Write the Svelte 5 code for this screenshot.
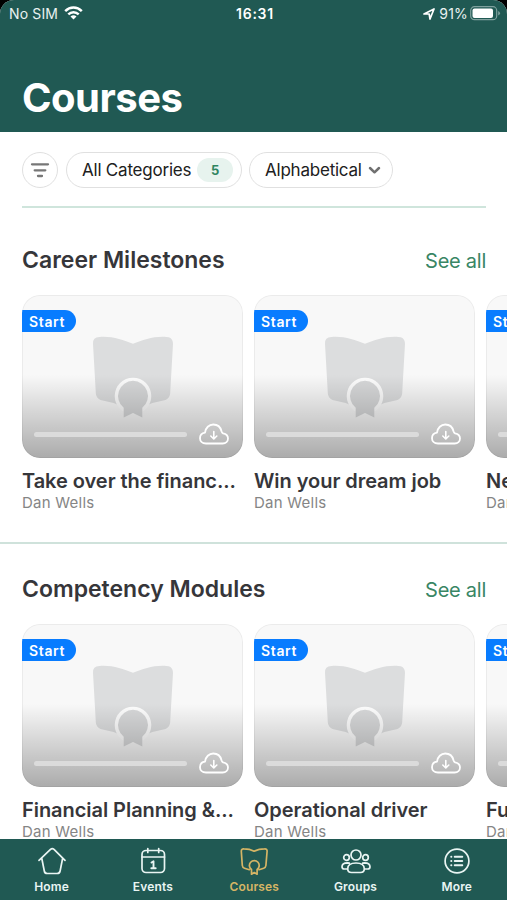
<script>
  const sections = [
    {
      title: "Career Milestones",
      courses: ["Take over the financ...", "Win your dream job", "Negotiation"],
    },
    {
      title: "Competency Modules",
      courses: ["Financial Planning &...", "Operational driver", "Fundamentals"],
    },
  ];
  const tabs = ["Home", "Events", "Courses", "Groups", "More"];
  let active = $state("Courses");
</script>

<div class="screen">
  <header>
    <div class="status">
      <div class="network">
        <span class="carrier">No SIM</span>
        <svg class="wifi" width="19" height="14" viewBox="0 0 19 14">
          <g fill="none" stroke="#fff" stroke-width="2.5">
            <path d="M1.2 5.2C6 .4 13 .4 17.8 5.2" />
            <path d="M4.3 8.4c3-2.9 7.400-2.900 10.400 0" />
          </g>
          <path d="M6.500 10.500q3-2.500 6 0l-3 3z" fill="#fff" />
        </svg>
      </div>
      <span class="time">16:31</span>
      <div class="power">
        <svg width="12" height="12" viewBox="0 0 12 12">
          <path
            d="M1 6 11 1 7 11 6.200 6z"
            fill="none"
            stroke="#fff"
            stroke-width="1.700"
            stroke-linejoin="round"
          />
        </svg>
        <span class="percent">91%</span>
        <svg class="battery" width="31" height="15" viewBox="0 0 31 15">
          <rect x=".7" y=".7" width="26" height="13" rx="3.800" fill="none" stroke="#7fa19e" stroke-width="1.200" />
          <rect x="2.500" y="2.500" width="20.500" height="9.500" rx="2" fill="#fff" />
          <path d="M28.200 5v4.500q1.800-.6 1.800-2.200T28.200 5z" fill="#7fa19e" />
        </svg>
      </div>
    </div>
    <h1>Courses</h1>
  </header>

  <main>
    <div class="filters">
      <button class="round" aria-label="Filter">
        <svg width="20" height="16" viewBox="0 0 20 16">
          <path
            d="M2 2.300h16M4.700 8.300h10.600M8 14h4"
            fill="none"
            stroke="#777"
            stroke-width="2.300"
            stroke-linecap="round"
          />
        </svg>
      </button>
      <button class="pill categories"><span>All Categories</span><b>5</b></button>
      <button class="pill sort">
        <span>Alphabetical</span>
        <svg width="13" height="9" viewBox="0 0 13 9">
          <path
            d="m2 2 4.500 4.300L11 2"
            fill="none"
            stroke="#707070"
            stroke-width="2.500"
            stroke-linecap="round"
            stroke-linejoin="round"
          />
        </svg>
      </button>
    </div>

    {#each sections as section}
      <section>
        <div class="heading">
          <h2>{section.title}</h2>
          <a href="#all">See all</a>
        </div>
        <div class="row">
          {#each section.courses as course}
            <article>
              <div class="cover">
                <svg class="book" width="82" height="83" viewBox="0 0 82 83">
                  <path
                    d="M1 8Q.5 1 7.500 1C20 0 31 4 41 7.800 51 4 62 0 74.500 1 81.500 1 81 8 81 8L78.200 57Q78 62 73.500 64 62 66 53 70H29Q20 66 8.500 64 4 62 3.800 57z"
                    fill="#dcddde"
                  />
                  <circle cx="41" cy="60" r="18.300" fill="#fcfcfc" />
                  <path d="M41 44.800a15.200 15.200 0 0 1 9.300 27V81.500L41 77l-9.300 4.500V71.800a15.200 15.200 0 0 1 9.300-27z" fill="#d6d7d8" />
                </svg>
                <div class="shade"></div>
                <span class="badge">Start</span>
                <div class="tools">
                  <div class="track"></div>
                  <svg width="30" height="22" viewBox="0 0 30 22">
                    <g fill="none" stroke="#fff" stroke-width="1.800" stroke-linecap="round" stroke-linejoin="round">
                      <path d="M7 20.500C3 20.500 1 18 1 15.200 1 12 3.200 9.900 6 9.600 6.600 4.800 10 1.500 14.300 1.500c4.200 0 7.200 2.600 8.200 6.700.3 1 .6 1.800 1.600 2.200 3 .6 4.900 2.500 4.900 5.100 0 3-2.300 5-5.300 5z" />
                      <path d="M14.800 8.500v7.300M11.800 13l3 3 3-3" stroke-width="1.600" />
                    </g>
                  </svg>
                </div>
              </div>
              <h3>{course}</h3>
              <p>Dan Wells</p>
            </article>
          {/each}
        </div>
      </section>
    {/each}
  </main>

  <nav>
    {#each tabs as tab}
      <button class:active={active === tab} onclick={() => (active = tab)}>
        <svg
          width="30"
          height="28"
          viewBox="0 0 30 28"
          fill="none"
          stroke="currentColor"
          stroke-width="1.700"
          stroke-linecap="round"
          stroke-linejoin="round"
        >
          {#if tab === "Home"}
            <path d="M2 13.300 13.500 2.300q1.800-1.400 3.500 0L28 13.300M4.800 11.500 7.300 24q.4 2.500 3 2.500h9.800q2.500 0 3-2.500l2.500-12.500" />
          {:else if tab === "Events"}
            <rect x="4" y="3.500" width="22.500" height="22" rx="4" />
            <path d="M4 10h22.500M9.800 1.500v4M20.700 1.500v4" />
            <path d="m13.500 15.500 2-1.200v7M13.300 21.300h4.400" stroke-width="1.900" />
          {:else if tab === "Courses"}
            <path d="M10.300 22.700 5.500 21.200q-2-.6-2.200-2.700L2.300 4.300Q2.300 1.600 5 1.800 10.500 1.800 15.200 4.200 20 1.800 25.500 1.800q2.700-.2 2.600 2.500l-1.200 14.200q-.2 2.100-2.200 2.700L20 22.700" />
            <path d="M12.500 22.500a4.900 4.900 0 1 1 5.600 0v4.700l-2.800-1.700-2.800 1.700z" />
          {:else if tab === "Groups"}
            <circle cx="15" cy="8" r="5" />
            <circle cx="5.500" cy="10.500" r="2.800" />
            <circle cx="24.500" cy="10.500" r="2.800" />
            <path d="M15 16q8.300 0 8.300 5.800 0 3.700-3.800 3.700h-9q-3.800 0-3.800-3.700Q6.700 16 15 16zM5.800 22H3.200Q1 22 1 19.700 1 15.800 6.500 15.800l1.800.3M24.200 22h2.600Q29 22 29 19.700 29 15.800 23.500 15.800l-1.800.3" />
          {:else}
            <circle cx="15" cy="14" r="11.900" />
            <path d="M12.700 9.800h7.600M12.700 14h7.600M12.700 18.200h7.600M9.200 9.800h.2M9.200 14h.2M9.200 18.200h.2" stroke-width="1.900" />
          {/if}
        </svg>
        <span>{tab}</span>
      </button>
    {/each}
  </nav>
</div>

<style>
  :global(body) {
    margin: 0;
    background: #000;
  }

  .screen {
    width: 507px;
    height: 900px;
    display: flex;
    flex-direction: column;
    overflow: hidden;
    border-radius: 14px 14px 0 0;
    background: #fff;
    font-family: Inter, Roboto, sans-serif;
  }

  h1,
  h2,
  h3,
  p {
    margin: 0;
  }

  button {
    font: inherit;
    padding: 0;
    border: 0;
    background: none;
    cursor: pointer;
  }

  header {
    height: 132px;
    flex: none;
    background: #205953;
    color: #fff;
  }

  .status {
    height: 27px;
    display: grid;
    grid-template-columns: 1fr 40px 1fr;
    align-items: center;
    padding: 0 6px 1px 9px;
    font-size: 14px;
    white-space: nowrap;
    color: #e9f1f0;
  }

  .network,
  .power {
    display: flex;
    align-items: center;
  }

  .carrier {
    letter-spacing: 0.15px;
  }

  .wifi {
    margin-left: 6px;
    margin-top: -1px;
  }

  .time {
    font-weight: 600;
    text-align: center;
    letter-spacing: 0.75px;
    color: #fff;
  }

  .power {
    justify-content: flex-end;
  }

  .percent {
    margin: 0 2px 0 4px;
    letter-spacing: 0.2px;
  }

  h1 {
    margin: 45px 22px 0;
    font-size: 40px;
    line-height: 50px;
    font-weight: 700;
    letter-spacing: -0.5px;
  }

  main {
    flex: 1;
    min-height: 0;
    overflow: hidden;
  }

  .filters {
    display: flex;
    gap: 8px;
    margin: 0 21px 0 22px;
    padding: 20px 0 18px;
    border-bottom: 2px solid #cfe5dc;
  }

  .round,
  .pill {
    box-sizing: border-box;
    height: 36px;
    display: flex;
    align-items: center;
    border: 1.500px solid #e0e0e0;
    border-radius: 18px;
    background: #fff;
    font-size: 17px;
    letter-spacing: -0.220px;
    color: #202020;
    white-space: nowrap;
  }

  .round {
    width: 36px;
    justify-content: center;
  }

  .categories {
    width: 176px;
    justify-content: space-between;
    padding: 0 8px 0 15px;
  }

  .categories b {
    width: 36px;
    height: 24px;
    border-radius: 12px;
    background: #e7f3ee;
    color: #2f8561;
    font-size: 13px;
    line-height: 24px;
    text-align: center;
  }

  .sort {
    width: 144px;
    margin-left: -1px;
    justify-content: space-between;
    padding: 0 11px 0 15px;
  }

  section {
    height: 336px;
    box-sizing: border-box;
    border-bottom: 2px solid #cfe2db;
  }

  section + section {
    margin-top: -7px;
  }

  .heading {
    display: flex;
    justify-content: space-between;
    padding: 37px 21px 0 22px;
    height: 50px;
  }

  h2 {
    font-size: 23px;
    line-height: 31px;
    font-weight: 600;
    color: #36363a;
  }

  a {
    margin-top: 2px;
    font-size: 20px;
    line-height: 28px;
    letter-spacing: -0.250px;
    color: #398665;
    text-decoration: none;
  }

  .row {
    display: flex;
    gap: 11px;
    padding-left: 22px;
  }

  article {
    width: 221px;
    flex: none;
  }

  .cover {
    position: relative;
    height: 163px;
    box-sizing: border-box;
    display: flex;
    flex-direction: column;
    align-items: flex-start;
    border-radius: 18px;
    overflow: hidden;
    background: #f8f8f8;
  }

  .book {
    position: absolute;
    left: 70px;
    top: 41px;
  }

  .shade {
    position: absolute;
    inset: 0;
    border-radius: 18px;
    box-shadow: inset 0 0 0 1px rgba(0, 0, 0, 0.05);
    background: linear-gradient(transparent 49%, rgba(0, 0, 0, 0.31) 100%);
  }

  .badge {
    position: relative;
    width: 54px;
    height: 22px;
    margin-top: 15px;
    border-radius: 0 11px 11px 0;
    background: #087cff;
    color: #fff;
    font-size: 14px;
    font-weight: 600;
    letter-spacing: 0.650px;
    line-height: 23px;
    text-indent: 7px;
  }

  .tools {
    position: relative;
    align-self: stretch;
    display: flex;
    align-items: center;
    justify-content: space-between;
    margin-top: auto;
    padding: 0 14px 13px 12px;
  }

  .track {
    width: 153px;
    height: 5px;
    border-radius: 3px;
    background: #dbdbdb;
  }

  h3 {
    margin-top: 11px;
    font-size: 20px;
    line-height: 25px;
    font-weight: 600;
    letter-spacing: -0.050px;
    color: #36363a;
    white-space: nowrap;
  }

  p {
    font-size: 15px;
    line-height: 17px;
    letter-spacing: 0.250px;
    color: #858585;
  }

  nav {
    height: 61px;
    flex: none;
    display: grid;
    grid-template-columns: repeat(5, 101.300px);
    padding-left: 1px;
    background: #205953;
  }

  nav button {
    display: flex;
    flex-direction: column;
    align-items: center;
    padding-top: 8px;
    color: #e9f5f3;
    font-size: 12px;
    font-weight: 600;
    letter-spacing: 0.150px;
  }

  nav span {
    margin-top: 4px;
    line-height: 15px;
  }

  nav .active {
    color: #d5b565;
  }
</style>
